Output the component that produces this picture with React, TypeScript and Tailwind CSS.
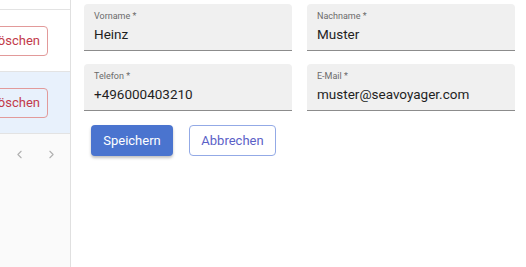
import { ChevronLeft, ChevronRight } from 'lucide-react';

const Field = ({ label, value }: { label: string; value: string }) => (
  <div className="w-[208px] h-[47px] bg-[#f0f0f0] rounded-t-[4px] border-b border-[#8c8c8c] px-[10px] pt-[6px]">
    <div className="text-[9px] leading-[12px] text-[#6b6b6b]">{label} *</div>
    <div className="text-[13.5px] leading-[20px] mt-[2px] text-[#1f1f1f]">{value}</div>
  </div>
);

const DeleteRow = ({ active }: { active?: boolean }) => (
  <div className={`h-[62px] border-b border-[#e3e3e3] flex items-center justify-end pr-[22px] ${active ? 'bg-[#e8f1fc]' : 'bg-white'}`}>
    <button className="h-[30px] pl-[10px] pr-[7px] border border-[#e29a9a] rounded-[4px] text-[13px] text-[#c23a4a] bg-transparent whitespace-nowrap">
      Löschen
    </button>
  </div>
);

export default function App() {
  return (
    <div className="w-[526px] h-[267px] flex bg-white font-['Roboto',sans-serif] overflow-hidden">
      <div className="w-[71px] shrink-0 border-r border-[#e0e0e0] flex flex-col bg-[#fafafa] overflow-hidden">
        <div className="h-[10px] bg-white border-b border-[#e3e3e3]" />
        <DeleteRow />
        <DeleteRow active />
        <div className="flex items-center gap-[19px] pl-[13px] pt-[14px] text-[#b0b0b0]">
          <ChevronLeft size={13} strokeWidth={2} />
          <ChevronRight size={13} strokeWidth={2} />
        </div>
      </div>
      <div className="flex-1 pl-[13px] pt-[4px]">
        <div className="grid grid-cols-[208px_208px] gap-x-[15px] gap-y-[13px]">
          <Field label="Vorname" value="Heinz" />
          <Field label="Nachname" value="Muster" />
          <Field label="Telefon" value="+496000403210" />
          <Field label="E-Mail" value="muster@seavoyager.com" />
        </div>
        <div className="flex gap-[16px] mt-[14px] pl-[7px]">
          <button className="w-[82px] h-[31px] rounded-[4px] bg-[#4a74cf] text-white text-[13px] shadow-[0_2px_3px_rgba(0,0,0,0.25)]">
            Speichern
          </button>
          <button className="w-[87px] h-[31px] rounded-[4px] border border-[#93aae6] bg-white text-[#5b5fc7] text-[13px]">
            Abbrechen
          </button>
        </div>
      </div>
    </div>
  );
}
